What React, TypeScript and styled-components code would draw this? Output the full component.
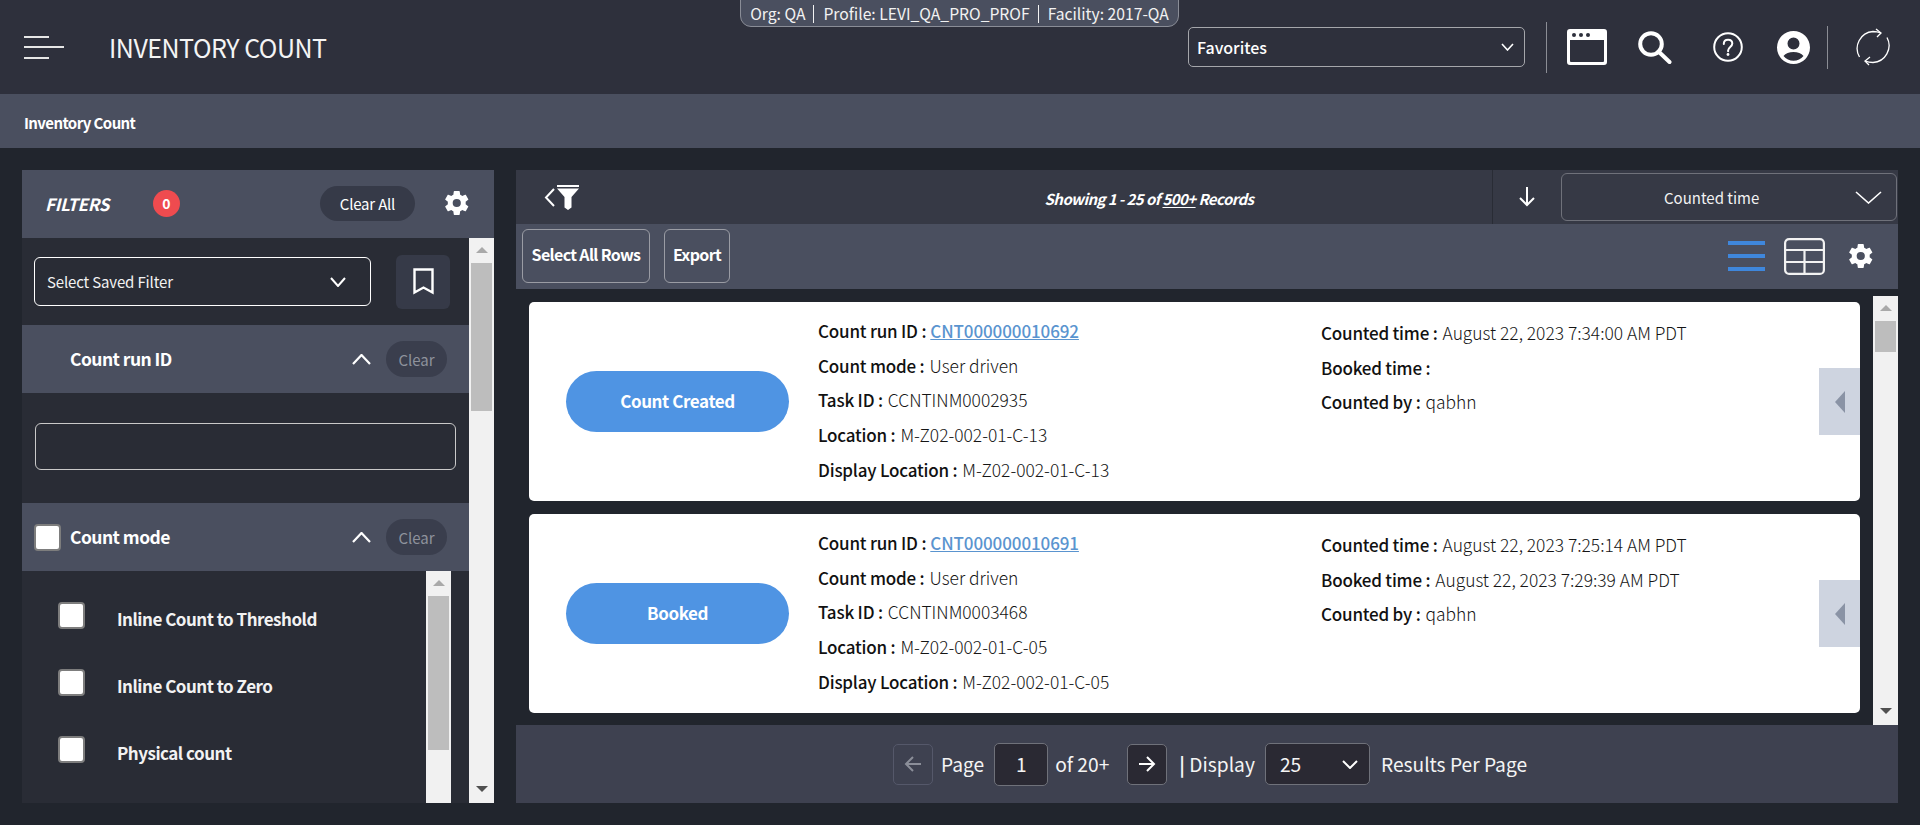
import React from "react";
import styled, { createGlobalStyle } from "styled-components";

const Global = createGlobalStyle`
  html, body { margin: 0; padding: 0; height: 100%; overflow: hidden; background: #21252d; }
  * { box-sizing: border-box; }
  body { font-family: "Noto Sans CJK SC", "Noto Sans", sans-serif; color: #fff; }
`;

const Page = styled.div`
  width: 1920px;
  height: 825px;
  display: flex;
  flex-direction: column;
  background: #21252d;
  position: relative;
`;

const Header = styled.header`
  height: 94px;
  background: #2e303c;
  display: flex;
  align-items: center;
  padding: 0 29px 0 24px;
`;
const Burger = styled.div`
  width: 40px;
  height: 23px;
  display: flex;
  flex-direction: column;
  justify-content: space-between;
  margin-right: 45px;
  span { display: block; height: 2px; background: #e6e6e6; width: 25px; }
  span:nth-child(2) { width: 40px; }
`;
const Title = styled.h1`
  margin: 0;
  font-size: 25px;
  font-weight: 400;
  letter-spacing: -0.5px;
  flex: 1;
  color: #f4f4f4;
`;
const OrgPill = styled.div`
  position: absolute;
  top: -3px;
  left: 740px;
  width: 439px;
  height: 30px;
  padding-top: 3px;
  border: 1px solid #8a8d97;
  border-radius: 0 0 11px 11px;
  background: #4a4f5f;
  font-size: 15.7px;
  display: flex;
  align-items: center;
  justify-content: center;
  white-space: nowrap;
  color: #f2f2f2;
  span + span { border-left: 1px solid #f2f2f2; margin-left: 8px; padding-left: 9px; line-height: 18px; }
`;
const Favorites = styled.div`
  width: 337px;
  height: 40px;
  border: 1px solid #a5a6ab;
  border-radius: 5px;
  display: flex;
  align-items: center;
  justify-content: space-between;
  padding: 0 10px 0 8px;
  font-size: 16px;
  font-weight: 500;
  margin-right: 21px;
`;
const VDivider = styled.div<{ $h: number }>`
  width: 1px;
  height: ${(p) => p.$h}px;
  background: #8b8d95;
`;
const IconSlot = styled.div<{ $w: number; $ml: number }>`
  width: ${(p) => p.$w}px;
  margin-left: ${(p) => p.$ml}px;
  display: flex;
  align-items: center;
  justify-content: center;
  svg { display: block; }
`;

const Crumb = styled.div`
  height: 54px;
  background: #4a4f5f;
  display: flex;
  align-items: center;
  padding: 3px 24px 0;
  font-size: 15px;
  font-weight: 600;
  letter-spacing: -0.6px;
`;

const Main = styled.main`
  flex: 1;
  display: flex;
  align-items: flex-start;
  padding: 22px 22px 0;
  gap: 22px;
`;

const FilterPanel = styled.aside`
  width: 472px;
  height: 633px;
  background: #292c35;
  display: flex;
  flex-direction: column;
`;
const FilterHead = styled.div`
  height: 68px;
  background: #4a4f5f;
  display: flex;
  align-items: center;
  padding: 0 23px 2px 23px;
`;
const FiltersLabel = styled.span`
  font-size: 17px;
  font-weight: 700;
  font-style: italic;
  letter-spacing: -0.3px;
  width: 108px;
`;
const Badge = styled.span`
  width: 27px;
  height: 27px;
  border-radius: 50%;
  background: #ef4b4f;
  font-size: 14px;
  font-weight: 700;
  display: flex;
  align-items: center;
  justify-content: center;
`;
const ClearAll = styled.button`
  margin-left: auto;
  margin-right: 28px;
  width: 95px;
  height: 35px;
  border: 0;
  border-radius: 18px;
  background: #363a48;
  color: #fff;
  letter-spacing: -0.2px;
  font-family: "Noto Sans CJK SC", sans-serif;
  font-size: 15px;
  font-weight: 400;
`;

const FilterBody = styled.div`
  flex: 1;
  display: flex;
  min-height: 0;
`;
const FilterScroll = styled.div`
  flex: 1;
  min-width: 0;
  display: flex;
  flex-direction: column;
`;
const SavedRow = styled.div`
  height: 87px;
  display: flex;
  align-items: center;
  padding: 0 19px 0 12px;
  justify-content: space-between;
`;
const SavedSelect = styled.div`
  width: 337px;
  height: 49px;
  border: 1px solid #fff;
  border-radius: 6px;
  display: flex;
  align-items: center;
  justify-content: space-between;
  padding: 0 24px 0 12px;
  font-size: 15px;
  letter-spacing: -0.15px;
  color: #f2f2f2;
`;
const BookmarkBtn = styled.div`
  width: 54px;
  height: 54px;
  border-radius: 6px;
  background: #363a48;
  display: flex;
  align-items: center;
  justify-content: center;
`;
const AccordionHead = styled.div`
  height: 68px;
  background: #4a4f5f;
  display: flex;
  align-items: center;
  padding: 0 22px 0 12px;
`;
const AccTitle = styled.span`
  font-size: 17.5px;
  font-weight: 600;
  letter-spacing: -0.55px;
  flex: 1;
  padding: 0 0 1px 36px;
`;
const AccCheckTitle = styled(AccTitle)`
  padding-left: 9px;
`;
const ClearBtn = styled.button`
  width: 61px;
  height: 36px;
  margin-left: 15px;
  border: 0;
  border-radius: 18px;
  background: #3a3e4d;
  color: #8e929c;
  font-family: "Noto Sans CJK SC", sans-serif;
  font-size: 15px;
  font-weight: 400;
`;
const InputWrap = styled.div`
  height: 110px;
  padding: 30px 13px;
`;
const TextInput = styled.div`
  height: 47px;
  border: 1px solid #c9c9c9;
  border-radius: 6px;
`;
const CheckBox = styled.span`
  display: block;
  width: 27px;
  height: 27px;
  flex: none;
  border-radius: 4px;
  background: #fff;
  border: 2px solid #7d7d7d;
`;
const OptionsArea = styled.div`
  flex: 1;
  display: flex;
  min-height: 0;
`;
const OptionsList = styled.div`
  flex: 1;
  padding: 31px 0 0 36px;
  display: flex;
  flex-direction: column;
  gap: 40px;
`;
const Option = styled.div`
  height: 27px;
  display: flex;
  align-items: center;
  gap: 32px;
  font-size: 17px;
  font-weight: 600;
  letter-spacing: -0.5px;
  color: #f2f2f2;
  span + span { position: relative; top: 3px; }
`;
const Track = styled.div<{ $mr?: number }>`
  width: 25px;
  flex: none;
  margin-right: ${(p) => p.$mr ?? 0}px;
  background: #f1f1f1;
  display: flex;
  flex-direction: column;
  align-items: center;
`;
const Thumb = styled.div<{ $h: number }>`
  width: 21px;
  height: ${(p) => p.$h}px;
  background: #bdbdbd;
`;
const ArrowUp = styled.div`
  height: 25px;
  flex: none;
  padding-top: 9px;
  &::before {
    content: "";
    display: block;
    border: 6px solid transparent;
    border-top: 0;
    border-bottom: 6px solid #a9a9a9;
  }
`;
const ArrowDown = styled.div`
  margin-top: auto;
  height: 25px;
  flex: none;
  padding-top: 8px;
  &::before {
    content: "";
    display: block;
    border: 6px solid transparent;
    border-bottom: 0;
    border-top: 6px solid #505050;
  }
`;

const Results = styled.section`
  width: 1382px;
  height: 633px;
  display: flex;
  flex-direction: column;
`;
const TopBar = styled.div`
  height: 54px;
  background: #363945;
  display: flex;
  align-items: center;
`;
const FunnelSlot = styled.div`
  width: 280px;
  padding-left: 28px;
  display: flex;
  align-items: center;
  svg { display: block; }
`;
const Showing = styled.div`
  width: 696px;
  padding: 2px 0 0 10px;
  text-align: center;
  font-size: 15px;
  font-style: italic;
  font-weight: 600;
  letter-spacing: -0.58px;
  u { text-underline-offset: 2px; }
`;
const SortDir = styled.div`
  width: 69px;
  height: 54px;
  border-left: 1px solid #292c35;
  display: flex;
  align-items: center;
  justify-content: center;
`;
const SortSelect = styled.div`
  width: 336px;
  height: 48px;
  border: 1px solid #6f717a;
  border-radius: 6px;
  display: flex;
  align-items: center;
  padding: 0 14px 0 102px;
  font-size: 15px;
  justify-content: space-between;
  color: #f2f2f2;
`;
const ToolBar = styled.div`
  height: 65px;
  background: #4a4f5f;
  display: flex;
  align-items: center;
  padding: 0 23px 1px 6px;
  gap: 14px;
`;
const ToolBtn = styled.div<{ $w: number }>`
  width: ${(p) => p.$w}px;
  height: 54px;
  border: 1px solid #9a9ca4;
  border-radius: 6px;
  display: flex;
  align-items: center;
  justify-content: center;
  padding-bottom: 4px;
  font-size: 16px;
  font-weight: 600;
  letter-spacing: -0.65px;
`;
const ToolIcons = styled.div`
  margin-left: auto;
  display: flex;
  align-items: center;
  gap: 19px;
  svg { display: block; }
  svg:last-child { margin-left: 3px; }
`;
const ListArea = styled.div`
  flex: 1;
  min-height: 0;
  display: flex;
  padding: 7px 0 0 13px;
  gap: 13px;
`;
const Cards = styled.div`
  flex: 1;
  min-width: 0;
  padding-top: 6px;
  display: flex;
  flex-direction: column;
  gap: 13px;
`;
const Card = styled.article`
  height: 199px;
  background: #fff;
  border-radius: 5px;
  display: flex;
  position: relative;
  color: #222;
  overflow: hidden;
`;
const StatusCol = styled.div`
  width: 289px;
  padding-left: 37px;
  display: flex;
  align-items: center;
`;
const StatusPill = styled.div`
  width: 223px;
  height: 61px;
  border-radius: 31px;
  background: #4f94e3;
  color: #fff;
  font-size: 17px;
  font-weight: 600;
  letter-spacing: -0.4px;
  padding-bottom: 3px;
  display: flex;
  align-items: center;
  justify-content: center;
`;
const Fields = styled.div<{ $w: number; $pt: number }>`
  width: ${(p) => p.$w}px;
  padding-top: ${(p) => p.$pt}px;
  display: flex;
  flex-direction: column;
`;
const Field = styled.div`
  height: 34.75px;
  display: flex;
  align-items: center;
  gap: 5px;
  white-space: nowrap;
  font-size: 17.4px;
  font-weight: 300;
  color: #151515;
  b { font-size: 17px; font-weight: 500; letter-spacing: -0.2px; color: #111; }
  a { margin-left: -1px; font-size: 17px; font-weight: 500; letter-spacing: -0.1px; color: #5a94cf; text-decoration: underline; }
`;
const SideFlag = styled.div`
  position: absolute;
  right: 0;
  top: 66px;
  width: 41px;
  height: 67px;
  background: #ced4e0;
  display: flex;
  align-items: center;
  padding-left: 16px;
  &::before {
    content: "";
    display: block;
    border: 11px solid transparent;
    border-left: 0;
    border-right: 10px solid #8a93a5;
  }
`;
const Pager = styled.footer`
  height: 78px;
  flex: none;
  background: #3e4150;
  display: flex;
  align-items: center;
  padding-left: 377px;
  font-size: 19.2px;
  color: #f4f4f4;
  font-weight: 400;
`;
const PageBtn = styled.div<{ $off?: boolean; $ml: number }>`
  width: 40px;
  height: 41px;
  margin-left: ${(p) => p.$ml}px;
  border: 1px solid ${(p) => (p.$off ? "#55586a" : "#6f717a")};
  border-radius: 5px;
  background: ${(p) => (p.$off ? "#3e4150" : "#2a2933")};
  display: flex;
  align-items: center;
  justify-content: center;
`;
const PageLabel = styled.span<{ $ml: number }>`
  margin-left: ${(p) => p.$ml}px;
  white-space: nowrap;
  b { font-weight: 700; }
`;
const PageInput = styled.div`
  width: 54px;
  height: 43px;
  margin-left: 10px;
  border: 1px solid #6f717a;
  border-radius: 5px;
  background: #2a2933;
  display: flex;
  align-items: center;
  justify-content: center;
`;
const PageSelect = styled.div`
  width: 105px;
  height: 42px;
  margin-left: 10px;
  border: 1px solid #6f717a;
  border-radius: 5px;
  background: #2a2933;
  display: flex;
  align-items: center;
  justify-content: space-between;
  padding: 0 11px 0 14px;
`;

const Chevron = ({ w, h, up, sw = 2 }: { w: number; h: number; up?: boolean; sw?: number }) => (
  <svg width={w} height={h} viewBox={`0 0 ${w} ${h}`} fill="none" stroke="#fff" strokeWidth={sw}>
    <path d={up ? `M1 ${h - 1}L${w / 2} 1L${w - 1} ${h - 1}` : `M1 1L${w / 2} ${h - 1}L${w - 1} 1`} />
  </svg>
);

const Gear = ({ size }: { size: number }) => (
  <svg width={size} height={size} viewBox="0 0 24 24" fill="#fff">
    <path fillRule="evenodd" d="M19.4 13c.04-.33.06-.66.06-1s-.02-.67-.07-1l2.16-1.68c.2-.15.25-.42.12-.64l-2.05-3.55c-.12-.22-.38-.3-.62-.22l-2.55 1.03c-.53-.4-1.1-.74-1.73-1l-.38-2.72A.5.5 0 0 0 13.84 1.8H9.75a.5.5 0 0 0-.5.42l-.38 2.72c-.63.26-1.2.6-1.73 1L4.59 4.91c-.23-.09-.5 0-.62.22L1.92 8.68c-.13.22-.07.49.12.64L4.2 11c-.05.33-.08.67-.08 1s.02.67.07 1l-2.16 1.68c-.19.15-.25.42-.12.64l2.05 3.55c.12.22.38.3.62.22l2.55-1.03c.53.4 1.1.74 1.73 1l.38 2.72c.05.24.25.42.5.42h4.09c.25 0 .46-.18.5-.42l.38-2.72c.63-.26 1.2-.6 1.73-1l2.55 1.03c.23.09.5 0 .62-.22l2.05-3.55c.13-.22.07-.49-.12-.64L19.4 13zM11.8 15.500a3.500 3.500 0 1 1 0-7 3.500 3.500 0 0 1 0 7z" />
  </svg>
);

type Row = { label: string; value?: string; link?: boolean };
const records: { status: string; a: Row[]; b: Row[] }[] = [
  {
    status: "Count Created",
    a: [
      { label: "Count run ID :", value: "CNT000000010692", link: true },
      { label: "Count mode :", value: "User driven" },
      { label: "Task ID :", value: "CCNTINM0002935" },
      { label: "Location :", value: "M-Z02-002-01-C-13" },
      { label: "Display Location :", value: "M-Z02-002-01-C-13" },
    ],
    b: [
      { label: "Counted time :", value: "August 22, 2023 7:34:00 AM PDT" },
      { label: "Booked time :" },
      { label: "Counted by :", value: "qabhn" },
    ],
  },
  {
    status: "Booked",
    a: [
      { label: "Count run ID :", value: "CNT000000010691", link: true },
      { label: "Count mode :", value: "User driven" },
      { label: "Task ID :", value: "CCNTINM0003468" },
      { label: "Location :", value: "M-Z02-002-01-C-05" },
      { label: "Display Location :", value: "M-Z02-002-01-C-05" },
    ],
    b: [
      { label: "Counted time :", value: "August 22, 2023 7:25:14 AM PDT" },
      { label: "Booked time :", value: "August 22, 2023 7:29:39 AM PDT" },
      { label: "Counted by :", value: "qabhn" },
    ],
  },
];

const FieldRow = ({ r }: { r: Row }) => (
  <Field>
    <b>{r.label}</b>
    {r.link ? <a href="#x">{r.value}</a> : <span>{r.value}</span>}
  </Field>
);

export default function App() {
  return (
    <Page>
      <Global />
      <OrgPill>
        <span>Org: QA</span>
        <span>Profile: LEVI_QA_PRO_PROF</span>
        <span>Facility: 2017-QA</span>
      </OrgPill>
      <Header>
        <Burger><span /><span /><span /></Burger>
        <Title>INVENTORY COUNT</Title>
        <Favorites>
          Favorites
          <Chevron w={13} h={8} sw={1.6} />
        </Favorites>
        <VDivider $h={51} />
        <IconSlot $w={40} $ml={20}>
          <svg width="40" height="36" viewBox="0 0 40 36">
            <path fill="#fff" fillRule="evenodd" d="M3 0h34a3 3 0 0 1 3 3v30a3 3 0 0 1-3 3H3a3 3 0 0 1-3-3V3a3 3 0 0 1 3-3zM3 11v21a1 1 0 0 0 1 1h32a1 1 0 0 0 1-1V11z" />
            <circle cx="7" cy="6" r="2" fill="#2e303c" />
            <circle cx="14" cy="6" r="2" fill="#2e303c" />
            <circle cx="21" cy="6" r="2" fill="#2e303c" />
          </svg>
        </IconSlot>
        <IconSlot $w={34} $ml={31}>
          <svg width="34" height="33" viewBox="0 0 34 33" fill="none" stroke="#fff">
            <circle cx="13" cy="13" r="10.800" strokeWidth="4" />
            <path d="M20.500 20.500L31.500 31" strokeWidth="4" strokeLinecap="round" />
          </svg>
        </IconSlot>
        <IconSlot $w={30} $ml={41}>
          <svg width="30" height="30" viewBox="0 0 30 30" fill="none" stroke="#fff" strokeWidth="2">
            <circle cx="15" cy="15" r="13.800" />
            <path d="M10.800 12c0-2.700 1.900-4.300 4.300-4.300 2.500 0 4.200 1.600 4.200 3.800 0 3.300-4.200 3.500-4.200 7v.7" strokeLinecap="round" />
            <circle cx="15" cy="22.500" r="1.400" fill="#fff" stroke="none" />
          </svg>
        </IconSlot>
        <IconSlot $w={33} $ml={34}>
          <svg width="33" height="33" viewBox="0 0 33 33">
            <path fill="#fff" fillRule="evenodd" d="M16.500 0a16.500 16.500 0 1 1 0 33a16.500 16.500 0 0 1 0-33zM16.500 6.500a6 6 0 1 0 0 12a6 6 0 0 0 0-12zM16.500 21c-4.200 0-8 1.400-10 3.900a12.900 12.900 0 0 0 20 0c-2-2.500-5.800-3.900-10-3.900z" />
          </svg>
        </IconSlot>
        <IconSlot $w={1} $ml={17}><VDivider $h={43} /></IconSlot>
        <IconSlot $w={36} $ml={27}>
          <svg width="36" height="38" viewBox="0 0 36 38" fill="none" stroke="#fff" strokeWidth="1.300">
            <path d="M4.500 29A17 17 0 0 1 18 3.500Q22 3.500 26 5" />
            <path d="M21 1L26 5L22 9" />
            <path d="M32 9.500A17 17 0 0 1 18 34.500Q14 34.500 10 33" />
            <path d="M15 29L10 33L14 37" />
          </svg>
        </IconSlot>
      </Header>
      <Crumb>Inventory Count</Crumb>
      <Main>
        <FilterPanel>
          <FilterHead>
            <FiltersLabel>FILTERS</FiltersLabel>
            <Badge>0</Badge>
            <ClearAll>Clear All</ClearAll>
            <Gear size={28} />
          </FilterHead>
          <FilterBody>
            <FilterScroll>
              <SavedRow>
                <SavedSelect>
                  Select Saved Filter
                  <Chevron w={16} h={10} sw={2} />
                </SavedSelect>
                <BookmarkBtn>
                  <svg width="21" height="27" viewBox="0 0 21 27" fill="none" stroke="#fff" strokeWidth="2.400">
                    <path d="M1.500 1.500H19.500V24.500L10.500 19.500L1.500 24.500Z" />
                  </svg>
                </BookmarkBtn>
              </SavedRow>
              <AccordionHead>
                <AccTitle>Count run ID</AccTitle>
                <Chevron w={19} h={11} up sw={2.200} />
                <ClearBtn>Clear</ClearBtn>
              </AccordionHead>
              <InputWrap><TextInput /></InputWrap>
              <AccordionHead>
                <CheckBox />
                <AccCheckTitle>Count mode</AccCheckTitle>
                <Chevron w={19} h={11} up sw={2.200} />
                <ClearBtn>Clear</ClearBtn>
              </AccordionHead>
              <OptionsArea>
                <OptionsList>
                  <Option><CheckBox /><span>Inline Count to Threshold</span></Option>
                  <Option><CheckBox /><span>Inline Count to Zero</span></Option>
                  <Option><CheckBox /><span>Physical count</span></Option>
                </OptionsList>
                <Track $mr={18}>
                  <ArrowUp />
                  <Thumb $h={154} />
                </Track>
              </OptionsArea>
            </FilterScroll>
            <Track>
              <ArrowUp />
              <Thumb $h={148} />
              <ArrowDown />
            </Track>
          </FilterBody>
        </FilterPanel>
        <Results>
          <TopBar>
            <FunnelSlot>
              <svg width="36" height="27" viewBox="0 0 36 27" fill="none">
                <path d="M10 5L2 13.500L10 22" stroke="#fff" strokeWidth="2" />
                <path d="M13 1H35V3H13zM13 4.500H35L27.500 13V23.500L24 26L20.500 23.500V13Z" fill="#fff" />
              </svg>
            </FunnelSlot>
            <Showing>Showing 1 - 25 of <u>500+</u> Records</Showing>
            <SortDir>
              <svg width="18" height="20" viewBox="0 0 18 20" fill="none" stroke="#fff" strokeWidth="2">
                <path d="M9 0V18M2 11L9 18L16 11" />
              </svg>
            </SortDir>
            <SortSelect>
              Counted time
              <Chevron w={27} h={13} sw={1.600} />
            </SortSelect>
          </TopBar>
          <ToolBar>
            <ToolBtn $w={128}>Select All Rows</ToolBtn>
            <ToolBtn $w={66}>Export</ToolBtn>
            <ToolIcons>
              <svg width="37" height="30" viewBox="0 0 37 30" fill="#3f87dc">
                <rect y="0" width="37" height="4" />
                <rect y="13" width="37" height="4" />
                <rect y="26" width="37" height="4" />
              </svg>
              <svg width="41" height="37" viewBox="0 0 41 37" fill="none" stroke="#f2f2f2" strokeWidth="2.200">
                <rect x="1.100" y="1.100" width="38.800" height="34.800" rx="4" />
                <path d="M1 12H40M1 24H40M20.500 12V36" />
              </svg>
              <Gear size={28} />
            </ToolIcons>
          </ToolBar>
          <ListArea>
            <Cards>
              {records.map((c) => (
                <Card key={c.status}>
                  <StatusCol><StatusPill>{c.status}</StatusPill></StatusCol>
                  <Fields $w={503} $pt={11}>
                    {c.a.map((r) => <FieldRow key={r.label} r={r} />)}
                  </Fields>
                  <Fields $w={400} $pt={13}>
                    {c.b.map((r) => <FieldRow key={r.label} r={r} />)}
                  </Fields>
                  <SideFlag />
                </Card>
              ))}
            </Cards>
            <Track>
              <ArrowUp />
              <Thumb $h={31} />
              <ArrowDown />
            </Track>
          </ListArea>
          <Pager>
            <PageBtn $off $ml={0}>
              <svg width="18" height="16" viewBox="0 0 18 16" fill="none" stroke="#8b8e99" strokeWidth="2"><path d="M17 8H2M9 1L2 8L9 15" /></svg>
            </PageBtn>
            <PageLabel $ml={8}>Page</PageLabel>
            <PageInput>1</PageInput>
            <PageLabel $ml={7}>of 20+</PageLabel>
            <PageBtn $ml={18}>
              <svg width="18" height="16" viewBox="0 0 18 16" fill="none" stroke="#fff" strokeWidth="2"><path d="M1 8H16M9 1L16 8L9 15" /></svg>
            </PageBtn>
            <PageLabel $ml={12}><b>|</b> Display</PageLabel>
            <PageSelect>25<Chevron w={16} h={9} sw={2} /></PageSelect>
            <PageLabel $ml={11}>Results Per Page</PageLabel>
          </Pager>
        </Results>
      </Main>
    </Page>
  );
}
